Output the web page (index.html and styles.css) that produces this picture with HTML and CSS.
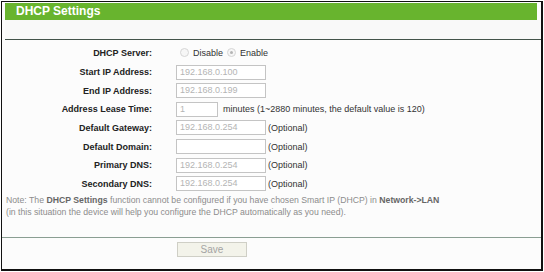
FILE: index.html
```html
<!DOCTYPE html>
<html>
<head>
<meta charset="utf-8">
<link rel="stylesheet" href="styles.css">
</head>
<body>
<div class="frame">
  <div class="titlebar">DHCP Settings</div>
  <div class="band"></div>
  <div class="rule-top"></div>
  <div class="form">
    <div class="row row-first">
      <div class="label">DHCP Server:</div>
      <div class="field">
        <span class="radio"></span><span class="rtext">Disable</span>
        <span class="radio checked"></span><span class="rtext">Enable</span>
      </div>
    </div>
    <div class="row">
      <div class="label">Start IP Address:</div>
      <div class="field"><span class="input">192.168.0.100</span></div>
    </div>
    <div class="row">
      <div class="label">End IP Address:</div>
      <div class="field"><span class="input">192.168.0.199</span></div>
    </div>
    <div class="row">
      <div class="label">Address Lease Time:</div>
      <div class="field"><span class="input short">1</span><span class="hint">minutes (1~2880 minutes, the default value is 120)</span></div>
    </div>
    <div class="row">
      <div class="label">Default Gateway:</div>
      <div class="field"><span class="input">192.168.0.254</span><span class="opt">(Optional)</span></div>
    </div>
    <div class="row">
      <div class="label">Default Domain:</div>
      <div class="field"><span class="input"></span><span class="opt">(Optional)</span></div>
    </div>
    <div class="row">
      <div class="label">Primary DNS:</div>
      <div class="field"><span class="input">192.168.0.254</span><span class="opt">(Optional)</span></div>
    </div>
    <div class="row">
      <div class="label">Secondary DNS:</div>
      <div class="field"><span class="input">192.168.0.254</span><span class="opt">(Optional)</span></div>
    </div>
  </div>
  <div class="note">
    <div>Note: The <b>DHCP Settings</b> function cannot be configured if you have chosen Smart IP (DHCP) in <b>Network-&gt;LAN</b></div>
    <div>(in this situation the device will help you configure the DHCP automatically as you need).</div>
  </div>
  <div class="rule-bottom"></div>
  <div class="actions"><span class="btn">Save</span></div>
</div>
</body>
</html>
```
FILE: styles.css
```css
html, body {
  margin: 0;
  padding: 0;
  background: #ffffff;
}
body {
  font-family: "Liberation Sans", Arial, sans-serif;
  font-size: 9px;
  color: #333;
}
.frame {
  box-sizing: border-box;
  margin: 1px 0 0 1px;
  width: 542px;
  height: 270px;
  border-top: 1px solid #111;
  border-left: 1px solid #111;
  border-right: 2px solid #111;
  border-bottom: 2px solid #111;
  background: #fcfcfc;
  overflow: hidden;
}
.titlebar {
  margin: 1px 4px 0 3px;
  height: 17px;
  line-height: 17px;
  background: #68b42e;
  color: #fff;
  font-weight: bold;
  font-size: 12px;
  padding-left: 11px;
}
.band {
  height: 19px;
  margin-left: 3px;
  background: #f9f9f9;
}
.rule-top {
  height: 1px;
  margin-left: 3px;
  background: #43544a;
}
.form {
  margin-top: 2.7px;
}
.row {
  display: flex;
  align-items: center;
  height: 18.67px;
}
.row-first {
  height: 20px;
}
.label {
  width: 150px;
  text-align: right;
  font-weight: bold;
  color: #222;
}
.field {
  margin-left: 24px;
  display: flex;
  align-items: center;
}
.radio {
  box-sizing: border-box;
  width: 9px;
  height: 9px;
  border: 1px solid #d6d6d6;
  border-radius: 50%;
  background: #f6f6f6;
  margin-left: 4px;
  margin-right: 4px;
  display: flex;
  align-items: center;
  justify-content: center;
}
.radio.checked::after {
  content: "";
  width: 3px;
  height: 3px;
  border-radius: 50%;
  background: #b4b4b4;
}
.rtext {
  color: #333;
}
.input {
  box-sizing: border-box;
  width: 90px;
  height: 15px;
  border: 1px solid #c4c4c4;
  background: #fff;
  color: #b4b4b4;
  padding-left: 3px;
  line-height: 13px;
}
.input.short {
  width: 42px;
}
.hint {
  margin-left: 5px;
  color: #333;
}
.opt {
  margin-left: 2px;
  color: #333;
}
.note {
  margin-top: 0.7px;
  padding-left: 4px;
  line-height: 12px;
  font-size: 8.7px;
  color: #8c8c8c;
}
.note b {
  color: #666;
}
.rule-bottom {
  height: 1px;
  margin-top: 19px;
  background: #8a9e92;
}
.actions {
  padding-left: 175px;
  margin-top: 4px;
}
.btn {
  display: inline-block;
  box-sizing: border-box;
  width: 70px;
  height: 15px;
  line-height: 13px;
  border: 1px solid #cfcfc6;
  background: #f3f3ea;
  color: #a4a4a4;
  text-align: center;
  font-size: 10px;
}
```
